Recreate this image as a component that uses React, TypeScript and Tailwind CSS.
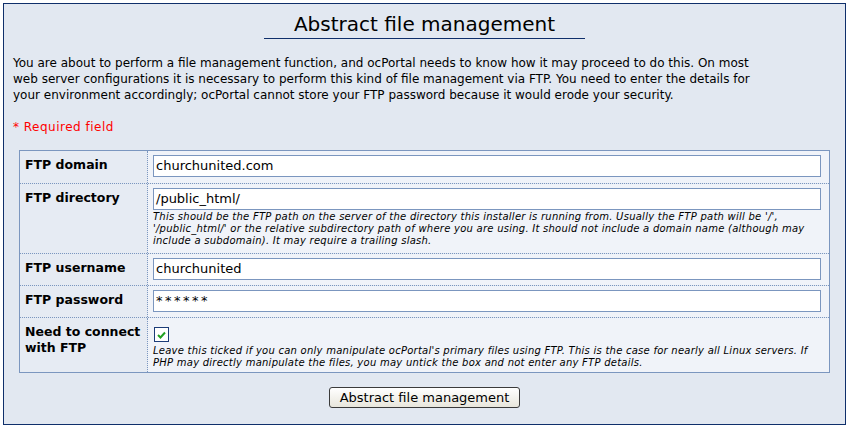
import React from 'react';

const font = { fontFamily: '"DejaVu Sans", Verdana, sans-serif' };

interface FieldRowProps {
  label: React.ReactNode;
  children: React.ReactNode;
  last?: boolean;
  bottom?: string;
}

const FieldRow: React.FC<FieldRowProps> = ({ label, children, last, bottom = 'pb-[5px]' }) => (
  <div className={`grid grid-cols-[128px_1fr] ${last ? '' : 'border-b border-dotted border-[#7b96bf]'}`}>
    <div className="bg-[#e6ebf3] border-r border-dotted border-[#7b96bf] pl-[5px] pt-[6px] text-[12.5px] font-bold leading-[16px] text-black">
      {label}
    </div>
    <div className={`bg-[#f0f3f9] pl-[5px] pr-[8px] pt-[4px] ${bottom}`}>{children}</div>
  </div>
);

const TextInput: React.FC<{ value: string; masked?: boolean }> = ({ value, masked }) => (
  <div
    className={`h-[22px] border border-[#7b96bf] bg-white pl-[2px] text-[13px] leading-[20px] text-black ${
      masked ? 'tracking-[2.5px]' : ''
    }`}
  >
    {value}
  </div>
);

const Description: React.FC<{ children: React.ReactNode }> = ({ children }) => (
  <p className="italic text-[10px] leading-[12px] tracking-[0.25px] text-black pt-[1px]">{children}</p>
);

const Checkbox: React.FC = () => (
  <div className="mt-[5px] mb-[2px] ml-[1px] h-[15px] w-[15px] border border-[#1c3c78] bg-white flex items-center justify-center">
    <svg width="9" height="8" viewBox="0 0 9 8">
      <path d="M1 4 L3.5 6.5 L8 1.5" stroke="#21a121" strokeWidth="2" fill="none" />
    </svg>
  </div>
);

export default function App() {
  return (
    <div style={font} className="p-[3px] bg-white">
      <div className="border border-[#0f2f6b] bg-[#e2e8f1] px-[9px] pb-[16px]">
        <div className="flex justify-center pt-[8px]">
          <h1 className="border-b border-[#0f2f6b] px-[30px] text-[20px] leading-[25px] pb-[1px] font-normal text-black">
            Abstract file management
          </h1>
        </div>
        <p className="mt-[16px] max-w-[760px] text-[12px] leading-[16px] text-black">
          You are about to perform a file management function, and ocPortal needs to know how it may proceed to do this. On most web server configurations it is necessary to perform this kind of file management via FTP. You need to enter the details for your environment accordingly; ocPortal cannot store your FTP password because it would erode your security.
        </p>
        <p className="mt-[16px] text-[12px] leading-[16px] tracking-[0.5px] text-[#ff0000]">* Required field</p>
        <div className="mt-[15px] mx-[6px] border border-[#7b96bf]">
          <FieldRow label="FTP domain" bottom="pb-[6px]">
            <TextInput value="churchunited.com" />
          </FieldRow>
          <FieldRow label="FTP directory" bottom="pb-[6px]">
            <TextInput value="/public_html/" />
            <Description>
              This should be the FTP path on the server of the directory this installer is running from. Usually the FTP path will be '/', '/public_html/' or the relative subdirectory path of where you are using. It should not include a domain name (although may include a subdomain). It may require a trailing slash.
            </Description>
          </FieldRow>
          <FieldRow label="FTP username">
            <TextInput value="churchunited" />
          </FieldRow>
          <FieldRow label="FTP password">
            <TextInput value="******" masked />
          </FieldRow>
          <FieldRow label={<>Need to connect<br />with FTP</>} last bottom="pb-[3px]">
            <Checkbox />
            <Description>
              Leave this ticked if you can only manipulate ocPortal's primary files using FTP. This is the case for nearly all Linux servers. If PHP may directly manipulate the files, you may untick the box and not enter any FTP details.
            </Description>
          </FieldRow>
        </div>
        <div className="mt-[14px] flex justify-center">
          <button className="h-[21px] px-[10px] rounded-[3px] border border-[#3b3b3b] bg-gradient-to-b from-white to-[#e8e6dc] text-[13px] leading-[19px] text-black">
            Abstract file management
          </button>
        </div>
      </div>
    </div>
  );
}
